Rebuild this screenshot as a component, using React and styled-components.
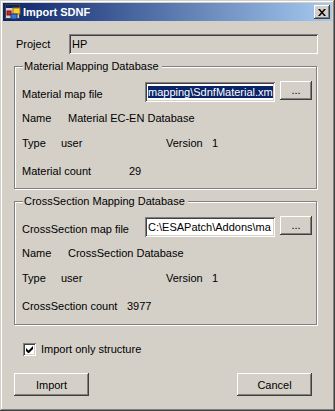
import React from 'react';
import styled, { createGlobalStyle } from 'styled-components';

const Global = createGlobalStyle`
  body { margin: 0; background: #d4d0c8; }
`;

const raised = `
  box-shadow: inset -1px -1px #404040, inset 1px 1px #fff, inset -2px -2px #808080, inset 2px 2px #d4d0c8;
`;

const sunken = `
  box-shadow: inset 1px 1px #808080, inset -1px -1px #fff, inset 2px 2px #404040, inset -2px -2px #d4d0c8;
`;

const Window = styled.div`
  width: 335px;
  height: 411px;
  box-sizing: border-box;
  padding: 3px;
  background: #d4d0c8;
  box-shadow: inset -1px -1px #404040, inset 1px 1px #d4d0c8, inset -2px -2px #808080, inset 2px 2px #fff;
  display: flex;
  flex-direction: column;
  font-family: "Liberation Sans", Arial, sans-serif;
  font-size: 11px;
  color: #000;
`;

const TitleBar = styled.div`
  height: 18px;
  display: flex;
  align-items: center;
  padding: 0 2px;
  background: linear-gradient(to right, #0a246a, #a6caf0);
`;

const Title = styled.span`
  margin-left: 2px;
  color: #fff;
  font-weight: bold;
  font-size: 11px;
`;

const CloseButton = styled.div`
  margin-left: auto;
  width: 16px;
  height: 14px;
  background: #d4d0c8;
  ${raised}
  display: flex;
  align-items: center;
  justify-content: center;
`;

const Client = styled.div`
  flex: 1;
  padding: 13px 14px 0 11px;
  display: flex;
  flex-direction: column;
`;

const Row = styled.div`
  display: flex;
  align-items: ${p => p.$align || 'center'};
  margin-top: ${p => p.$top || 0}px;
  line-height: 13px;
  white-space: nowrap;
`;

const Cell = styled.span`
  flex: none;
  width: ${p => (p.$w ? `${p.$w}px` : 'auto')};
  padding-top: ${p => p.$pt || 0}px;
  margin-left: ${p => p.$ml || 0}px;
`;

const TextBox = styled.div`
  flex: ${p => (p.$w ? 'none' : 1)};
  width: ${p => (p.$w ? `${p.$w}px` : 'auto')};
  height: 20px;
  box-sizing: border-box;
  padding: 3px 2px 0 3px;
  background: ${p => (p.$disabled ? '#d4d0c8' : '#fff')};
  ${sunken}
  line-height: 14px;
`;

const TextValue = styled.div`
  overflow: hidden;
  white-space: nowrap;
`;

const Selected = styled.span`
  background: #0a246a;
  color: #fff;
`;

const SmallButton = styled.div`
  flex: none;
  width: 32px;
  height: 19px;
  margin-left: 5px;
  margin-top: -1px;
  background: #d4d0c8;
  ${raised}
  display: flex;
  align-items: center;
  justify-content: center;
  line-height: 13px;
`;

const Group = styled.div`
  position: relative;
  margin-top: ${p => p.$top}px;
  margin-right: 1px;
  height: ${p => p.$h}px;
  box-sizing: border-box;
  border: 1px solid #808080;
  box-shadow: inset 1px 1px #fff, 1px 1px #fff;
  padding: 15px 0 0 7px;
`;

const Legend = styled.span`
  position: absolute;
  top: -7px;
  left: 8px;
  padding: 0 3px 0 1px;
  background: #d4d0c8;
  line-height: 13px;
`;

const CheckRow = styled.label`
  display: flex;
  align-items: center;
  margin: 18px 0 0 9px;
  line-height: 13px;
`;

const CheckBox = styled.span`
  width: 13px;
  height: 13px;
  box-sizing: border-box;
  background: #fff;
  ${sunken}
  display: flex;
  align-items: center;
  justify-content: center;
  margin-right: 5px;
`;

const ButtonRow = styled.div`
  display: flex;
  justify-content: space-between;
  margin: 17px 6px 0 0;
`;

const Button = styled.div`
  width: 75px;
  height: 23px;
  background: #d4d0c8;
  ${raised}
  display: flex;
  align-items: center;
  justify-content: center;
`;

function AppIcon() {
  return (
    <svg width="16" height="16" viewBox="0 0 16 16">
      <rect x="0.5" y="0.5" width="14" height="14" fill="#d4d0c8" stroke="#404040" />
      <rect x="1" y="1" width="13" height="3" fill="#0a246a" />
      <rect x="8" y="4" width="7" height="6" fill="#f8d030" stroke="#a07000" />
      <rect x="2" y="7" width="4" height="4" fill="#d82020" stroke="#801010" />
      <rect x="6" y="10" width="6" height="5" fill="#3a78d8" stroke="#1a3880" />
    </svg>
  );
}

function InfoBlock({ title, fileLabel, file, selected, name, countLabel, count, countW, h, top }) {
  return (
    <Group $h={h} $top={top}>
      <Legend>{title}</Legend>
      <Row $align="flex-start">
        <Cell $w={123} $pt={6}>{fileLabel}</Cell>
        <TextBox $w={130}>
          <TextValue>{selected ? <Selected>{file}</Selected> : file}</TextValue>
        </TextBox>
        <SmallButton>...</SmallButton>
      </Row>
      <Row $top={10}>
        <Cell $w={46}>Name</Cell>
        <Cell>{name}</Cell>
      </Row>
      <Row $top={12}>
        <Cell $w={39}>Type</Cell>
        <Cell $w={105}>user</Cell>
        <Cell $w={46}>Version</Cell>
        <Cell>1</Cell>
      </Row>
      <Row $top={15}>
        <Cell $w={countW}>{countLabel}</Cell>
        <Cell>{count}</Cell>
      </Row>
    </Group>
  );
}

export default function App() {
  return (
    <>
      <Global />
      <Window>
        <TitleBar>
          <AppIcon />
          <Title>Import SDNF</Title>
          <CloseButton>
            <svg width="8" height="7" viewBox="0 0 8 7">
              <path d="M0 0h2l2 2.5L6 0h2L5 3.5 8 7H6L4 4.5 2 7H0l3-3.5z" fill="#000" />
            </svg>
          </CloseButton>
        </TitleBar>
        <Client>
          <Row>
            <Cell $w={53} $ml={2}>Project</Cell>
            <TextBox $disabled>
              <TextValue>HP</TextValue>
            </TextBox>
          </Row>
          <InfoBlock
            top={12}
            h={123}
            title="Material Mapping Database"
            fileLabel="Material map file"
            file="mapping\SdnfMaterial.xm"
            selected
            name="Material EC-EN Database"
            countLabel="Material count"
            countW={107}
            count="29"
          />
          <InfoBlock
            top={12}
            h={124}
            title="CrossSection Mapping Database"
            fileLabel="CrossSection map file"
            file="C:\ESAPatch\Addons\ma"
            name="CrossSection Database"
            countLabel="CrossSection count"
            countW={105}
            count="3977"
          />
          <CheckRow>
            <CheckBox>
              <svg width="7" height="7" viewBox="0 0 7 7">
                <path d="M0 2v3l2 2h1l4-4V0L2.5 4.5z" fill="#000" />
              </svg>
            </CheckBox>
            Import only structure
          </CheckRow>
          <ButtonRow>
            <Button>Import</Button>
            <Button>Cancel</Button>
          </ButtonRow>
        </Client>
      </Window>
    </>
  );
}
